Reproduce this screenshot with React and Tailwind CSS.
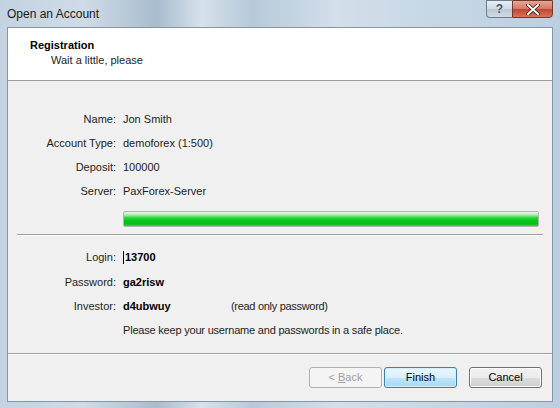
import React from "react";

const info = [
  { label: "Name:", value: "Jon Smith" },
  { label: "Account Type:", value: "demoforex (1:500)" },
  { label: "Deposit:", value: "100000" },
  { label: "Server:", value: "PaxForex-Server" },
];

const Row = ({ label, children, className = "" }) => (
  <div className={`flex items-center h-6 ${className}`}>
    <div className="w-[108px] text-right">{label}</div>
    <div className="pl-[7px] flex items-center">{children}</div>
  </div>
);

const Button = ({ children, variant }) => {
  const styles = {
    disabled: "border-[#adb2b5] bg-[#f4f4f4] text-[#a0a0a0]",
    default:
      "border-[#3c7fb1] bg-[linear-gradient(#eaf6fd_0%,#d9f0fc_50%,#bee6fd_51%,#a7d9f5_100%)] text-black shadow-[inset_0_0_0_1px_#d4eefc]",
    normal:
      "border-[#707070] bg-[linear-gradient(#f2f2f2_0%,#ebebeb_50%,#dddddd_51%,#cfcfcf_100%)] text-black shadow-[inset_0_0_0_1px_#fcfcfc]",
  };
  return (
    <div
      className={`w-[73px] h-[21px] border rounded-[3px] flex items-center justify-center text-[11px] ${styles[variant]}`}
    >
      {children}
    </div>
  );
};

export default function App() {
  return (
    <div
      className="w-[560px] h-[408px] flex flex-col bg-[linear-gradient(90deg,#c3d3e2_0%,#cfdbe7_15%,#a9bccd_28%,#d6e1ec_36%,#b7c9d9_45%,#d3dfea_60%,#c6d6e5_80%,#bccfe0_100%)] text-[11px] text-[#1e1e1e]"
      style={{ fontFamily: '"Liberation Sans", Arial, sans-serif' }}
    >
      {/* title bar */}
      <div className="h-[27px] flex items-start relative">
        <div className="pl-[7px] pt-[5px] text-[12px] text-[#1a1a1a]">Open an Account</div>
        <div className="ml-auto mr-[7px] flex">
          <div className="w-[26px] h-[18px] border border-[#6d7c8c] border-r-0 rounded-bl-[4px] bg-[linear-gradient(#e6edf4_0%,#d0dbe6_50%,#b9c8d6_51%,#cfdbe6_100%)] flex items-center justify-center text-[12px] font-bold text-[#4a5866]">
            ?
          </div>
          <div className="w-[41px] h-[18px] border border-[#6d3a32] rounded-br-[4px] bg-[linear-gradient(#e8a493_0%,#d47865_50%,#c2462f_51%,#d8735c_100%)] flex items-center justify-center">
            <svg width="14" height="11" viewBox="0 0 14 11">
              <path d="M2 1 L12 10 M12 1 L2 10" stroke="#3b1a14" strokeWidth="3.6" strokeLinecap="round" />
              <path d="M2 1 L12 10 M12 1 L2 10" stroke="#ffffff" strokeWidth="2" strokeLinecap="round" />
            </svg>
          </div>
        </div>
      </div>

      {/* client area */}
      <div className="mx-[7px] mb-[6px] flex-1 flex flex-col bg-[#f0f0f0] border border-[#8796a6]">
        <div className="h-[53px] bg-white border-b border-[#a0a0a0] pl-[22px] pt-[10px]">
          <div className="font-bold leading-[14px] text-black">Registration</div>
          <div className="pl-[21px] pt-[1px] leading-[14px]">Wait a little, please</div>
        </div>

        <div className="pt-[26px]">
          {info.map((r) => (
            <Row key={r.label} label={r.label}>
              {r.value}
            </Row>
          ))}
        </div>

        <div className="ml-[115px] mr-[13px] mt-[8px] h-[16px] border border-[#b2b2b2] bg-[linear-gradient(#e6f7e6_0%,#b7ebb5_20%,#2ed83a_40%,#06c91b_60%,#03bb15_85%,#46c94f_100%)] rounded-[2px]" />

        <div className="mx-[9px] mt-[7px] border-t border-[#a0a0a0] border-b border-b-white" />

        <div className="pt-[9px]">
          <Row label="Login:">
            <span className="w-px h-[13px] bg-black mr-[1px]" />
            <span className="font-bold text-black">13700</span>
          </Row>
          <Row label="Password:" className="mt-px">
            <span className="font-bold text-black">ga2risw</span>
          </Row>
          <Row label="Investor:">
            <span className="font-bold text-black w-[108px]">d4ubwuy</span>
            <span className="tracking-[-0.3px]">(read only password)</span>
          </Row>
          <Row label="">
            <span className="tracking-[-0.2px]">Please keep your username and passwords in a safe place.</span>
          </Row>
        </div>

        <div className="mt-[11px] border-t border-[#a0a0a0] border-b border-b-white" />

        <div className="flex-1 flex items-center justify-end pr-[10px] pb-[1px]">
          <Button variant="disabled">
            &lt;&nbsp;<span className="underline">B</span>ack
          </Button>
          <div className="ml-[2px]">
            <Button variant="default">Finish</Button>
          </div>
          <div className="ml-[12px]">
            <Button variant="normal">Cancel</Button>
          </div>
        </div>
      </div>
    </div>
  );
}
